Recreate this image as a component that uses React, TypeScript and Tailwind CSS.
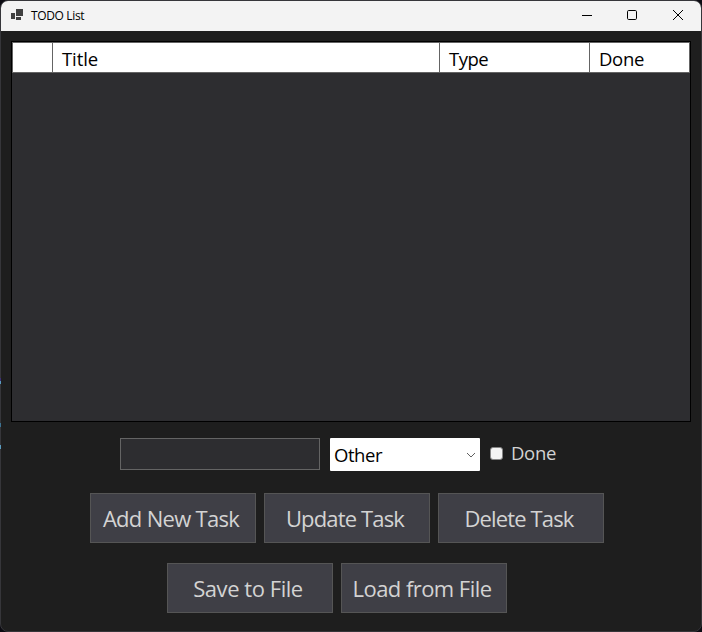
import React from "react";

function Column({ title, className }: { title: string; className: string }) {
  return (
    <div className={`flex items-center border-r border-[#646464] bg-white pl-[9px] pt-[3px] text-[18.5px] leading-none text-black ${className}`}>
      {title}
    </div>
  );
}

function Action({ label, tracking }: { label: string; tracking: string }) {
  return (
    <button className={`flex h-[50px] w-[166px] items-center justify-center whitespace-nowrap border border-[#555555] bg-[#3f3f46] pr-[4px] text-[22px] leading-none text-[#d3d3d3] ${tracking}`}>
      {label}
    </button>
  );
}

export default function App() {
  return (
    <div className="relative h-[632px] w-[702px] overflow-hidden bg-[#0c0b12] font-['Open_Sans','Noto_Sans',sans-serif]">
      <div className="flex h-full w-full flex-col overflow-hidden rounded-lg border border-[#36363a] bg-[#1e1e1e]">
        <header className="flex h-[30px] shrink-0 items-center bg-[#f3f3f3] text-black">
          <svg className="-mt-[3px] ml-[10px]" width="12" height="11" viewBox="0 0 12 11" fill="#404040">
            <path d="M5 0h7v7H5zM0 4h4v6H0zM5 8h5v3H5z" />
          </svg>
          <h1 className="ml-2 text-[12px] leading-none tracking-[-0.35px]">TODO List</h1>
          <div className="ml-auto flex items-center pb-[2px] pr-[17px]">
            <svg width="12" height="12" viewBox="0 0 12 12" stroke="#000">
              <path d="M1 6.5h10" />
            </svg>
            <svg className="ml-[33px]" width="12" height="12" viewBox="0 0 12 12" fill="none" stroke="#000">
              <rect x="1.5" y="1.5" width="9" height="9" rx="1.2" />
            </svg>
            <svg className="ml-[34px]" width="12" height="12" viewBox="0 0 12 12" stroke="#000">
              <path d="M1 1l10 10M11 1L1 11" />
            </svg>
          </div>
        </header>
        <main className="flex flex-col px-[10px] pt-[10px]">
          <section className="h-[381px] w-[680px] border border-black bg-[#2d2d30]">
            <div className="flex h-[31px] border-y border-l border-[#646464]">
              <Column title="" className="w-[40px]" />
              <Column title="Title" className="w-[387px] tracking-[-0.1px]" />
              <Column title="Type" className="w-[150px] tracking-[-0.5px]" />
              <Column title="Done" className="w-[100px] tracking-[-0.3px]" />
            </div>
          </section>
          <div className="mt-4 flex pl-[109px]">
            <div className="h-8 w-[200px] border border-[#646464] bg-[#2d2d30]" />
            <div className="ml-[10px] flex h-[33px] w-[150px] items-center justify-between rounded-[1px] bg-white pl-1 pr-[4px] text-[18.5px] leading-none tracking-[-0.45px] text-black">
              <span className="pt-px">Other</span>
              <svg width="10" height="10" viewBox="0 0 10 10" fill="none" stroke="#606060">
                <path d="M1 3l4 4 4-4" />
              </svg>
            </div>
            <label className="ml-[10px] flex h-[30px] items-center text-[18.5px] leading-none tracking-[-0.3px] text-[#d3d3d3]">
              <span className="mr-2 h-[13px] w-[13px] rounded-[3px] border border-[#858585] bg-[#f3f3f3]" />
              Done
            </label>
          </div>
          <div className="mt-[22px] flex gap-2 pl-[79px]">
            <Action label="Add New Task" tracking="tracking-[-0.7px]" />
            <Action label="Update Task" tracking="tracking-[-0.85px]" />
            <Action label="Delete Task" tracking="tracking-[-0.85px]" />
          </div>
          <div className="mt-5 flex gap-2 pl-[156px]">
            <Action label="Save to File" tracking="tracking-[-0.45px]" />
            <Action label="Load from File" tracking="tracking-[-0.55px]" />
          </div>
        </main>
      </div>
      <span className="absolute left-0 top-[378px] h-[3px] w-px bg-[#3c2f78]" />
      <span className="absolute left-0 top-[381px] h-[3px] w-px bg-[#5a9cc0]" />
      <span className="absolute left-0 top-[423px] h-[4px] w-px bg-[#3d7291]" />
      <span className="absolute left-0 top-[445px] h-[4px] w-px bg-[#5a9cc0]" />
    </div>
  );
}
